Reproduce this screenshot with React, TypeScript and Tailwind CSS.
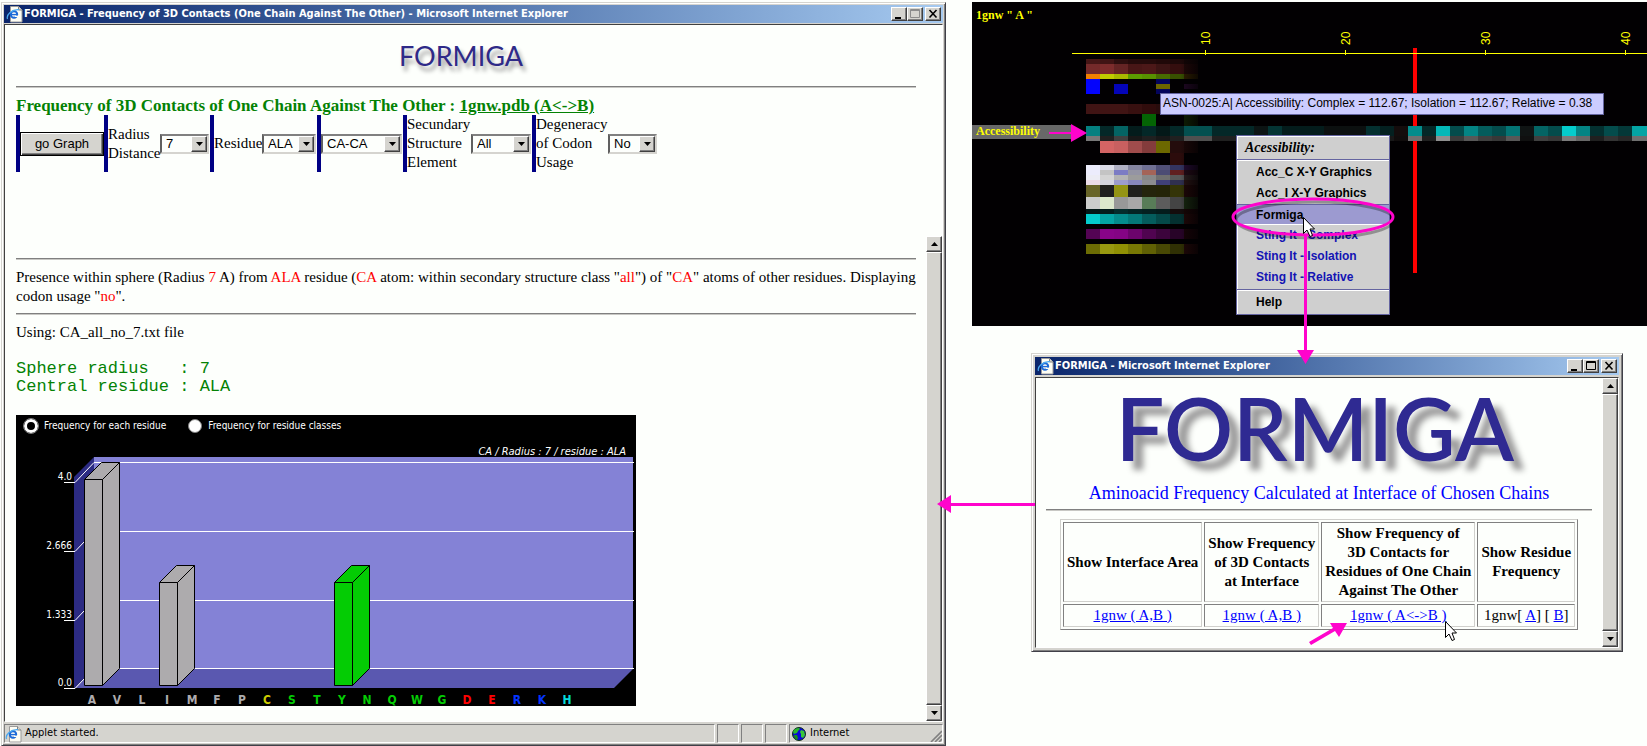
import type { ReactNode } from "react";
import { clsx } from "clsx";

const sans = "font-['Liberation_Sans',Arial,sans-serif]";
const serif = "font-['Liberation_Serif','Times_New_Roman',serif]";
const tahoma = "font-['DejaVu_Sans_Condensed','DejaVu_Sans',sans-serif]";

const raised =
  "border border-t-white border-l-white border-r-[#404040] border-b-[#404040] bg-[#d5d4cf] shadow-[inset_-1px_-1px_0_#808080]";

function IEIcon() {
  return (
    <svg width="18" height="18" viewBox="0 0 18 18" aria-hidden="true">
      <path d="M4.5 1.5h8l3.5 3.5v12H4.5z" fill="#fdfdf4" stroke="#9a9a9a" />
      <path d="M12.5 1.5V5H16" fill="#d8d8d0" stroke="#808080" />
      <circle cx="8" cy="9.5" r="3.2" fill="none" stroke="#1c6ad8" strokeWidth="2" />
      <path d="M5 9.6h6" stroke="#1c6ad8" strokeWidth="1.4" />
      <path d="M9 11.3h4" stroke="#fdfdf4" strokeWidth="1.4" />
      <path d="M1.5 14C0 10 6 4 13 4.6" fill="none" stroke="#48a8f0" strokeWidth="1.2" />
    </svg>
  );
}

function GlobeIcon() {
  return (
    <svg width="14" height="14" viewBox="0 0 14 14" aria-hidden="true">
      <circle cx="7" cy="7" r="6.5" fill="#0808d8" stroke="#103010" />
      <path d="M1 5c1-3 3-4 6-4l1 1-2 2-1 2-3 1z" fill="#28b828" />
      <path d="M2 8l3 0 1 3-1 2c-2-1-3-3-3-5z" fill="#189018" />
      <path d="M9 3l3 1 1 4-2 3-2-1 0-3-1-2z" fill="#38c838" />
    </svg>
  );
}

function TitleButton({ label, children }: { label: string; children: ReactNode }) {
  return (
    <button type="button" aria-label={label} className={clsx("h-3.5 w-4", raised)}>
      <svg viewBox="0 0 14 12" className="block h-3 w-3.5" aria-hidden="true">
        {children}
      </svg>
    </button>
  );
}

function TitleBar({ title, disabledMax }: { title: string; disabledMax?: boolean }) {
  return (
    <div className="flex h-[18px] items-center bg-linear-to-r from-[#0a246a] to-[#a6caf0] pr-0.5 pl-0.5">
      <IEIcon />
      <h1 className={clsx("min-w-0 flex-1 truncate text-[11px] leading-[18px] font-bold text-white", tahoma)}>
        {title}
      </h1>
      <TitleButton label="Minimize">
        <path d="M3 9h6v2H3z" fill="#000" />
      </TitleButton>
      <TitleButton label="Maximize">
        <path
          d="M2.5 1.5h9v8h-9zM2 2.5h10"
          fill="none"
          stroke={disabledMax ? "#8c8c8c" : "#000"}
        />
      </TitleButton>
      <div className="w-0.5" />
      <TitleButton label="Close">
        <path d="M3.5 2l7 7.5M10.5 2l-7 7.5" fill="none" stroke="#000" strokeWidth="1.6" />
      </TitleButton>
    </div>
  );
}

function ScrollBar() {
  return (
    <div className="flex w-4 shrink-0 flex-col bg-[#eceae6]">
      <button type="button" aria-label="Scroll up" className={clsx("flex h-4 items-center justify-center", raised)}>
        <svg width="7" height="4" viewBox="0 0 7 4" aria-hidden="true">
          <path d="M3.5 0L7 4H0z" />
        </svg>
      </button>
      <div className={clsx("flex-1", raised)} />
      <button type="button" aria-label="Scroll down" className={clsx("flex h-4 items-center justify-center", raised)}>
        <svg width="7" height="4" viewBox="0 0 7 4" aria-hidden="true">
          <path d="M0 0h7L3.5 4z" />
        </svg>
      </button>
    </div>
  );
}

function Window({ children, className }: { children: ReactNode; className?: string }) {
  return (
    <section
      className={clsx(
        "flex flex-col border border-t-[#d5d4cf] border-l-[#d5d4cf] border-r-[#404048] border-b-[#404048] bg-[#d5d4cf] p-0.5 shadow-[inset_1px_1px_0_#fff,inset_-1px_-1px_0_#808080]",
        className,
      )}
    >
      {children}
    </section>
  );
}

function Rule() {
  return <hr className="h-0.5 border-0 border-t border-b border-t-[#808080] border-b-[#c8c8c4]" />;
}

interface ComboProps {
  id: string;
  value: string;
  label?: string;
  width: string;
}

function Combo({ id, value, label, width }: ComboProps) {
  return (
    <div className={clsx("relative h-5", width)}>
      <select
        id={id}
        aria-label={label}
        defaultValue={value}
        className={clsx(
          "h-full w-full appearance-none border-2 border-t-[#808080] border-l-[#606060] border-r-[#d5d4cf] border-b-[#d5d4cf] bg-[#fdfffc] pl-1 text-[13px] leading-4 text-black",
          sans,
        )}
      >
        <option>{value}</option>
      </select>
      <span
        className={clsx("pointer-events-none absolute top-0.5 right-0.5 flex h-4 w-4 items-center justify-center", raised)}
      >
        <svg width="7" height="4" viewBox="0 0 7 4" aria-hidden="true">
          <path d="M0 0h7L3.5 4z" />
        </svg>
      </span>
    </div>
  );
}

function Field({ children }: { children: ReactNode }) {
  return <div className="flex items-center border-l-4 border-[#000084] pr-px">{children}</div>;
}

function Controls() {
  return (
    <form className="flex h-[57px] text-[15px] leading-[19px]">
      <div className="flex items-center border-l-4 border-[#000084]">
        <button
          type="button"
          className={clsx(
            "h-6 w-21 border border-black bg-[#d5d4cf] text-[13px] shadow-[inset_1px_1px_0_#fff,inset_-1px_-1px_0_#404040,inset_-2px_-2px_0_#808080]",
            sans,
          )}
        >
          go Graph
        </button>
      </div>
      <Field>
        <label htmlFor="radius" className="w-13">
          Radius
          <br />
          Distance
        </label>
        <Combo id="radius" value="7" width="w-[49px]" />
      </Field>
      <Field>
        <label htmlFor="residue" className="w-12">
          Residue
        </label>
        <Combo id="residue" value="ALA" width="w-[54px]" />
      </Field>
      <Field>
        <Combo id="atoms" value="CA-CA" label="Atoms" width="w-[81px]" />
      </Field>
      <Field>
        <label htmlFor="structure" className="w-16">
          Secundary
          <br />
          Structure
          <br />
          Element
        </label>
        <Combo id="structure" value="All" width="w-[60px]" />
      </Field>
      <Field>
        <label htmlFor="codon" className="w-18">
          Degeneracy
          <br />
          of Codon
          <br />
          Usage
        </label>
        <Combo id="codon" value="No" width="w-[49px]" />
      </Field>
    </form>
  );
}

const GRAY = "#adabad";
const GREEN = "#04cc04";

const residues = [
  { code: "A", color: GRAY, value: 4 },
  { code: "V", color: GRAY, value: 0 },
  { code: "L", color: GRAY, value: 0 },
  { code: "I", color: GRAY, value: 2 },
  { code: "M", color: GRAY, value: 0 },
  { code: "F", color: GRAY, value: 0 },
  { code: "P", color: GRAY, value: 0 },
  { code: "C", color: "#cccc00", value: 0 },
  { code: "S", color: GREEN, value: 0 },
  { code: "T", color: GREEN, value: 0 },
  { code: "Y", color: GREEN, value: 2 },
  { code: "N", color: GREEN, value: 0 },
  { code: "Q", color: GREEN, value: 0 },
  { code: "W", color: GREEN, value: 0 },
  { code: "G", color: GREEN, value: 0 },
  { code: "D", color: "#ff0000", value: 0 },
  { code: "E", color: "#ff0000", value: 0 },
  { code: "R", color: "#0434ff", value: 0 },
  { code: "K", color: "#0434ff", value: 0 },
  { code: "H", color: "#04dcdc", value: 0 },
];

const ticks = [
  { label: "4.0", y: 67, back: 47 },
  { label: "2.666", y: 136, back: 116 },
  { label: "1.333", y: 205, back: 185 },
  { label: "0.0", y: 273, back: 253 },
];

function Bar({ x, value, color }: { x: number; value: number; color: string }) {
  const bottom = 270;
  const top = Math.round(bottom - value * 51.5);
  return (
    <g fill={color} stroke="#000">
      <path d={`M${x} ${top}l17 -17h18l-17 17z`} />
      <path d={`M${x + 18} ${top}l17 -17V${bottom - 17}l-17 17z`} />
      <path d={`M${x} ${top}h18V${bottom}h-18z`} />
    </g>
  );
}

function Chart() {
  return (
    <svg
      viewBox="0 28 620 263"
      className="block w-[620px] overflow-visible"
      role="img"
      aria-label="Residue frequency"
    >
      <g className={tahoma}>
        <path d="M78 42H617V254H78z" fill="#8482d6" />
        <path d="M58 62L78 42V254L58 273z" fill="#2c2b83" />
        <path d="M58 273L78 254H617L598 273z" fill="#5a58b0" />
        {ticks.map((t) => (
          <g key={t.label}>
            <path
              d={`M48 ${t.y + 0.5}H59L78 ${t.back + 0.5}H618`}
              fill="none"
              stroke="#fff"
            />
            <text x="56" y={t.y - 2} textAnchor="end" fontSize="10" fill="#fff">
              {t.label}
            </text>
          </g>
        ))}
        <text x="610" y="40" textAnchor="end" fontSize="11" fontStyle="italic" fill="#fff">
          CA / Radius : 7 / residue : ALA
        </text>
        <g transform="translate(0.5 0.5)">
          {residues.map((r, i) =>
            r.value > 0 ? (
              <Bar key={r.code} x={68 + i * 25} value={r.value} color={r.color} />
            ) : null,
          )}
        </g>
        {residues.map((r, i) => (
          <text
            key={r.code}
            x={76 + i * 25}
            y="289"
            textAnchor="middle"
            fontSize="12"
            fontWeight="bold"
            fill={r.color}
          >
            {r.code}
          </text>
        ))}
      </g>
    </svg>
  );
}

function FrequencyApplet() {
  const radio =
    "h-3.5 w-3.5 appearance-none rounded-full border border-[#808080] bg-white checked:border-[3px] checked:border-white checked:bg-black checked:outline checked:outline-[#808080]";
  return (
    <div className="w-[620px] bg-black">
      <div className={clsx("flex h-7 items-start gap-[22px] pt-1 pl-2 text-[10px] leading-[14px] text-white", tahoma)}>
        <label className="flex items-center gap-1.5">
          <input type="radio" name="mode" defaultChecked className={radio} />
          Frequency for each residue
        </label>
        <label className="flex items-center gap-1.5">
          <input type="radio" name="mode" className={radio} />
          Frequency for residue classes
        </label>
      </div>
      <Chart />
    </div>
  );
}

function StatusBar() {
  const cell =
    "flex items-center border border-t-[#808080] border-l-[#808080] border-r-white border-b-white";
  return (
    <footer className={clsx("mt-0.5 flex h-[19px] gap-0.5 text-[11px]", tahoma)}>
      <div className={cell + " flex-1 gap-0.5"}>
        <IEIcon />
        Applet started.
      </div>
      <div className={cell + " w-[22px]"} />
      <div className={cell + " w-[22px]"} />
      <div className={cell + " w-[22px]"} />
      <div className={cell + " relative w-[154px] gap-1 pl-0.5"}>
        <GlobeIcon />
        Internet
        <svg className="absolute right-0 bottom-0" width="12" height="12" viewBox="0 0 12 12" aria-hidden="true">
          <path d="M1 12L12 1M5 12l7-7M9 12l3-3" stroke="#808080" strokeWidth="1.6" />
        </svg>
      </div>
    </footer>
  );
}

const Red = ({ children }: { children: ReactNode }) => <span className="text-[#ff0000]">{children}</span>;

function FrequencyWindow() {
  return (
    <Window className="mt-0.5 min-w-0">
      <TitleBar
        title="FORMIGA - Frequency of 3D Contacts (One Chain Against The Other) - Microsoft Internet Explorer"
        disabledMax
      />
      <div className="mt-px border border-t-[#404040] border-l-[#404040] border-r-white border-b-white bg-[#fdfffc]">
        <div className={clsx("h-[211px] pr-[26px] pl-[11px]", serif)}>
          <div className="flex h-[61px] items-center justify-center pr-2.5 font-['Lato',sans-serif] text-[27px] leading-8 text-[#2f2a88] [text-shadow:3px_5px_4px_#999]">
            FORMIGA
          </div>
          <Rule />
          <h2 className="pt-2 text-[17px] leading-[19px] font-bold text-[#048204]">
            Frequency of 3D Contacts of One Chain Against The Other :{" "}
            <a href="#pdb" className="underline">
              1gnw.pdb (A&lt;-&gt;B)
            </a>
          </h2>
          <Controls />
        </div>
        <div className="flex">
          <div className={clsx("min-w-0 flex-1 pt-[22px] pr-2.5 pb-[15px] pl-[11px] text-[15px] leading-[19px]", serif)}>
            <Rule />
            <p className="pt-2 pb-[7px]">
              Presence within sphere (Radius <Red>7</Red> A) from <Red>ALA</Red> residue (<Red>CA</Red> atom: within
              secondary structure class "<Red>all</Red>") of "<Red>CA</Red>" atoms of other residues. Displaying codon
              usage "<Red>no</Red>".
            </p>
            <Rule />
            <p className="pt-2">Using: CA_all_no_7.txt file</p>
            <pre className="py-[18px] font-['Liberation_Mono',monospace] text-[17px] leading-[18px] text-[#048204]">
              {"Sphere radius   : 7\nCentral residue : ALA"}
            </pre>
            <div className="pt-px">
              <FrequencyApplet />
            </div>
          </div>
          <ScrollBar />
        </div>
      </div>
      <StatusBar />
    </Window>
  );
}

// Each track: y, height, colour of every residue column ("" leaves it empty).
const tracks: [number, number, string[]][] = [
  [57, 5, ["#451616", "#401414", "#2c0e0e", "#240a0a", "#240a0a", "#200808", "#1c0808", "#140606"]],
  [62, 10, ["#742a2a", "#7c2c2c", "#642424", "#481616", "#4c1818", "#3c1414", "#340e0e", "#200808"]],
  [72, 5, ["#f08000", "#c0cc00", "#a8b800", "#5c9c00", "#589000", "#486c00", "#385000", "#302000"]],
  [77, 5, ["#0404fc", "", "", "", "", "#04045c", "", ""]],
  [82, 5, ["#0404fc", "", "#0404b8", "", "", "#6c6400", "", "#200824"]],
  [87, 5, ["#0404fc", "", "#0404b8", "", "", "#04045c", "", ""]],
  [102, 10, ["#401414", "#401414", "#401414", "#381010", "#300c0c", "#280c0c", "", ""]],
  [112, 12, ["", "", "", "", "#046404", "", "", "#102004"]],
  [139, 12, ["", "#d46464", "#c86060", "#a04c4c", "#843c3c", "#6c6800", "#240c0c", "#1c0808"]],
  [151, 12, ["", "", "", "", "", "", "#2c0c0c", ""]],
  [163, 5, ["#ececfc", "#dcdce8", "#b0b0c4", "#8484a0", "#707094", "#505078", "#343460", "#240c34"]],
  [168, 5, ["#ececfc", "#c4c4c4", "#7c7cc4", "#9494a4", "#a46458", "#4c4c74", "#602020", "#240c18"]],
  [173, 5, ["#ececf4", "#d4d4d4", "#b4b4b4", "#9c9c9c", "#888888", "#707070", "#585858", "#2c2020"]],
  [178, 5, ["#ecdce8", "#d4d4e0", "#9c9ccc", "#8888bc", "#8c8c90", "#404078", "#303050", "#281414"]],
  [183, 12, ["#686428", "#202020", "#949414", "#20201c", "#24240c", "#242408", "#343408", "#200808"]],
  [195, 12, ["#cccccc", "#dce8cc", "#989898", "#a8a8a8", "#587c58", "#5c5c5c", "#444444", "#182810"]],
  [207, 5, ["#041818", "#041c1c", "#042c2c", "#042424", "#042020", "#041c1c", "#140c0c", "#180606"]],
  [212, 10, ["#04cccc", "#04a4a4", "#048c8c", "#047878", "#045c5c", "#044848", "#043030", "#200808"]],
  [227, 10, ["#540454", "#880488", "#840484", "#6c046c", "#500450", "#3c043c", "#280428", "#180408"]],
  [242, 10, ["#6c6c04", "#989810", "#909004", "#787804", "#606004", "#484804", "#303004", "#200808"]],
];

const complex = [
  "#048080", "#042828", "#046464", "#041c1c", "#042828", "#041818", "#042828", "#045050", "#045050", "#042828",
  "#042828", "#042828", "#0c1414", "#043434", "#041c1c", "#041c1c", "#041c1c", "#0c1010", "#0c1010", "#0c1010",
  "#043030", "#042020", "#140c0c", "#048c8c", "#042828", "#04b8b8", "#044c4c", "#048484", "#045c5c", "#044c4c",
  "#047474", "#101414", "#046464", "#044c4c", "#04cccc", "#048484", "#043030", "#044c4c", "#043838", "#04a4a4",
];

const isolation = [
  "#787878", "#202020", "#404040", "#181818", "#202020", "#181818", "#202020", "#505050", "#505050", "#202020",
  "#202020", "#181818", "#101010", "#202020", "#181818", "#181818", "#181818", "#0c0c0c", "#0c0c0c", "#0c0c0c",
  "#202020", "#181818", "#100c0c", "#707070", "#202020", "#909090", "#3c3c3c", "#585858", "#404040", "#383838",
  "#585858", "#101010", "#404040", "#383838", "#7c7c7c", "#686868", "#202020", "#343434", "#282828", "#707070",
];

function SequenceMap() {
  return (
    <svg width="675" height="324" viewBox="0 0 675 324" className="block max-w-none" aria-hidden="true">
      <defs>
        <linearGradient id="fade">
          <stop offset="0" stopColor="#020002" stopOpacity="0" />
          <stop offset="1" stopColor="#020002" stopOpacity="0.8" />
        </linearGradient>
      </defs>
      <g shapeRendering="crispEdges">
        {tracks.map(([y, h, cells]) =>
          cells.map((c, i) => (
            <rect key={`${y}-${i}`} x={114 + i * 14} y={y} width="14" height={h} fill={c || "none"} />
          )),
        )}
        <rect x="208" y="55" width="20" height="200" fill="url(#fade)" />
        <path d="M441 46h4v225h-4z" fill="#ff0000" />
        {complex.map((c, i) => (
          <rect key={i} x={114 + i * 14} y="124" width="15" height="10" fill={c} />
        ))}
        {isolation.map((c, i) => (
          <rect key={i} x={114 + i * 14} y="134" width="15" height="5" fill={c} />
        ))}
        <path d="M100 51h575v1H100z" fill="#ffff00" />
        <path d="M0 123h100v14H0z" fill="#686868" />
      </g>
      {[10, 20, 30, 40].map((n) => (
        <g key={n} fill="#ffff00" className={sans}>
          <path d={`M${93 + n * 14} 48h1v5h-1z`} />
          <text x={98 + n * 14} y="43" fontSize="12" transform={`rotate(-90 ${98 + n * 14} 43)`}>
            {n}
          </text>
        </g>
      ))}
      <g fill="#ffff00" fontWeight="bold" className={serif}>
        <text x="4" y="17" fontSize="12">
          1gnw " A "
        </text>
        <text x="4" y="133" fontSize="12">
          Accessibility
        </text>
      </g>
    </svg>
  );
}

function MenuItem({ children, blue, active }: { children: ReactNode; blue?: boolean; active?: boolean }) {
  return (
    <button
      type="button"
      role="menuitem"
      className={clsx(
        "block h-[21px] w-full pl-[19px] text-left text-[12px] leading-[21px] font-bold",
        blue ? "text-[#1414b4]" : "text-black",
        active && "border-t border-b border-t-[#6464a0] border-b-white bg-[#9c9ad0] leading-[19px]",
      )}
    >
      {children}
    </button>
  );
}

function ContextMenu() {
  return (
    <div
      role="menu"
      className={clsx(
        "absolute top-[133px] left-[264px] h-[180px] w-[154px] border border-[#6464a0] bg-[#cfcfcf] shadow-[inset_1px_1px_0_#fff]",
        sans,
      )}
    >
      <div className={clsx("h-6 border-b border-[#6464a0] pl-2 text-[14px] leading-6 font-bold italic", serif)}>
        Acessibility:
      </div>
      <div className="border-t border-white py-px">
        <MenuItem>Acc_C X-Y Graphics</MenuItem>
        <MenuItem>Acc_I X-Y Graphics</MenuItem>
        <MenuItem active>Formiga</MenuItem>
        <MenuItem blue>Sting It - Complex</MenuItem>
        <MenuItem blue>Sting It - Isolation</MenuItem>
        <MenuItem blue>Sting It - Relative</MenuItem>
      </div>
      <div className="border-t border-[#6464a0] pt-0.5 shadow-[inset_0_1px_0_#fff]">
        <MenuItem>Help</MenuItem>
      </div>
    </div>
  );
}

function StingPanel() {
  return (
    <section className="relative mt-0.5 h-[324px] overflow-hidden bg-[#020002]">
      <SequenceMap />
      <div
        role="tooltip"
        className={clsx(
          "absolute top-[91px] left-[188px] h-[22px] w-[444px] border border-[#6464a0] bg-[#ccccff] pl-0.5 text-[12px] leading-[18px] whitespace-nowrap",
          sans,
        )}
      >
        ASN-0025:A| Accessibility: Complex = 112.67; Isolation = 112.67; Relative = 0.38
      </div>
      <ContextMenu />
    </section>
  );
}

function InterfaceWindow() {
  const cell = "border border-t-[#808080] border-l-[#808080] border-r-[#d0d0cc] border-b-[#d0d0cc] px-[3px]";
  const link = "text-[#0000ff] underline";
  return (
    <Window className="mt-[27px] mr-6 ml-[59px]">
      <div className="p-px">
        <TitleBar title="FORMIGA - Microsoft Internet Explorer" />
        <div className="mt-0.5 flex border border-t-[#404040] border-l-[#404040] border-r-white border-b-white bg-[#fdfffc]">
          <div className={clsx("min-w-0 flex-1 px-2.5 pb-[17px]", serif)}>
            <div className="h-[103px] pr-2 text-center font-['Lato',sans-serif] text-[86px] leading-[100px] font-semibold text-[#2f2a92] [text-shadow:10px_9px_6px_#999]">
              FORMIGA
            </div>
            <h2 className="pt-px pb-[5px] text-center text-[18px] leading-[22px] text-[#0000ff]">
              Aminoacid Frequency Calculated at Interface of Chosen Chains
            </h2>
            <Rule />
            <table className="mx-auto mt-2 border-separate border-spacing-0.5 border border-t-[#d0d0cc] border-l-[#d0d0cc] border-r-[#808080] border-b-[#808080] text-center text-[15px] leading-[19px]">
              <thead>
                <tr>
                  <th className={cell}>Show Interface Area</th>
                  <th className={cell}>
                    Show Frequency
                    <br />
                    of 3D Contacts
                    <br />
                    at Interface
                  </th>
                  <th className={cell + " py-px"}>
                    Show Frequency of
                    <br />
                    3D Contacts for
                    <br />
                    Residues of One Chain
                    <br />
                    Against The Other
                  </th>
                  <th className={cell}>
                    Show Residue
                    <br />
                    Frequency
                  </th>
                </tr>
              </thead>
              <tbody>
                <tr>
                  <td className={cell + " py-px"}>
                    <a href="#area" className={link}>
                      1gnw ( A,B )
                    </a>
                  </td>
                  <td className={cell}>
                    <a href="#contacts" className={link}>
                      1gnw ( A,B )
                    </a>
                  </td>
                  <td className={cell}>
                    <a href="#chains" className={link}>
                      1gnw ( A&lt;-&gt;B )
                    </a>
                  </td>
                  <td className={cell}>
                    1gnw[{" "}
                    <a href="#chain-a" className={link}>
                      A
                    </a>
                    ] [{" "}
                    <a href="#chain-b" className={link}>
                      B
                    </a>
                    ]
                  </td>
                </tr>
              </tbody>
            </table>
          </div>
          <ScrollBar />
        </div>
      </div>
    </Window>
  );
}

function Pointer({ x, y }: { x: number; y: number }) {
  return (
    <path
      transform={`translate(${x} ${y})`}
      d="M0.5 0.5V16.5L4 13l3 6.5 2.5-1L7 12h4.5z"
      fill="#fff"
      stroke="#000"
    />
  );
}

// Arrows that lead from one window to the next
function Annotations() {
  const pink = "#ff04cc";
  return (
    <svg
      className="pointer-events-none absolute top-0 left-0"
      width="1647"
      height="746"
      viewBox="0 0 1647 746"
      aria-hidden="true"
    >
      <ellipse cx="1315" cy="220" rx="79" ry="18" fill="none" stroke="#000" strokeOpacity="0.3" strokeWidth="3" />
      <ellipse cx="1313" cy="217" rx="80" ry="18" fill="none" stroke={pink} strokeWidth="3" />
      <g fill={pink}>
        <path d="M1049 132h22v-8l16 9-16 9v-8h-22z" />
        <path d="M1304 236h3v114h7l-8.5 14-8.5-14h7z" />
        <path d="M1035 503v3h-84v7l-14-9 14-9v8z" />
        <path d="M1309 642l24-14-3-5 17 0-8 14-4-6-24 14z" />
      </g>
      <Pointer x={1303} y={217} />
      <Pointer x={1445} y={621} />
    </svg>
  );
}

export default function App() {
  return (
    <main className="relative grid min-h-screen grid-cols-[7fr_5fr] items-start gap-[26px] overflow-hidden bg-[#fdfffc] pl-px text-black">
      <FrequencyWindow />
      <div className="min-w-0">
        <StingPanel />
        <InterfaceWindow />
      </div>
      <Annotations />
    </main>
  );
}
